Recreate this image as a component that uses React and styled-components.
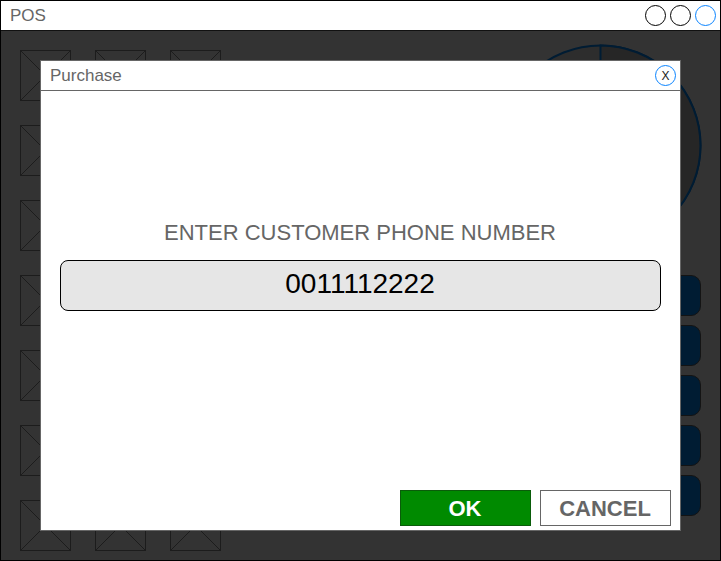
import React from "react";
import styled, { createGlobalStyle } from "styled-components";

const GlobalStyle = createGlobalStyle`
  * { box-sizing: border-box; }
  body {
    margin: 0;
    overflow: hidden;
    font-family: "Liberation Sans", Arial, sans-serif;
  }
`;

const Window = styled.main`
  position: relative;
  display: flex;
  flex-direction: column;
  width: 721px;
  height: 561px;
  border: 1px solid #000;
  background: #333;
`;

const TitleBar = styled.header`
  display: flex;
  flex: none;
  align-items: center;
  justify-content: space-between;
  height: 30px;
  padding: 0 4px 0 9px;
  border-bottom: 1px solid ${(p) => p.$line};
  background: #fff;
`;

const Title = styled.h1`
  margin: 0;
  color: #666;
  font-size: 17px;
  font-weight: 400;
  line-height: 29px;
`;

const WindowControls = styled.div`
  display: flex;
  gap: 4px;
`;

const RoundButton = styled.button`
  display: flex;
  align-items: center;
  justify-content: center;
  width: 21px;
  height: 21px;
  padding: 2px 0 0;
  border: 1px solid ${(p) => (p.$accent ? "#0a84ff" : "#000")};
  border-radius: 50%;
  background: #fff;
  color: #222;
  font: 12px/17px "Liberation Sans", Arial, sans-serif;
`;

const Workspace = styled.div`
  display: flex;
  justify-content: space-between;
  padding: 19px 19px 0;
`;

const ProductGrid = styled.div`
  display: grid;
  grid-template-columns: repeat(3, 51px);
  grid-auto-rows: 51px;
  gap: 24px;
`;

const Picture = styled.svg`
  display: block;
  width: 51px;
  height: 51px;
  fill: none;
  stroke: #1c1c1c;
`;

const SidePanel = styled.aside`
  display: flex;
  flex-direction: column;
  align-items: flex-end;
  width: 202px;
  margin-top: -6px;
`;

const Pie = styled.svg`
  display: block;
  flex: none;
  width: 203px;
  height: 203px;
  margin: 0 -1px 28px 0;
`;

const Actions = styled.div`
  display: grid;
  grid-auto-rows: 41px;
  gap: 9px;
  width: 202px;
`;

const Action = styled.div`
  border: 1px solid #141414;
  border-radius: 10px;
  background: #001c33;
`;

const Dialog = styled.section`
  position: absolute;
  top: 59px;
  left: 39px;
  display: flex;
  flex-direction: column;
  width: 641px;
  height: 471px;
  border: 1px solid #666;
  background: #fff;
`;

const DialogBody = styled.div`
  display: flex;
  flex: 1;
  flex-direction: column;
  padding: 129px 19px 4px;
`;

const Prompt = styled.label`
  margin-bottom: 14px;
  padding-right: 1px;
  color: #666;
  font-size: 22px;
  line-height: 26px;
  text-align: center;
`;

const PhoneInput = styled.input`
  width: 601px;
  height: 51px;
  padding: 0 1px 4px 0;
  border: 1px solid #000;
  border-radius: 8px;
  outline: 0;
  background: #e6e6e6;
  color: #000;
  font: 28px "Liberation Sans", Arial, sans-serif;
  text-align: center;
`;

const DialogActions = styled.footer`
  display: flex;
  gap: 9px;
  justify-content: flex-end;
  margin: auto -10px 0 0;
`;

const DialogButton = styled.button`
  width: 131px;
  height: 36px;
  padding: 2px 1px 0 0;
  border: 1px solid ${(p) => (p.$primary ? "#0a5c0a" : "#666")};
  background: ${(p) => (p.$primary ? "#008a00" : "#fff")};
  color: ${(p) => (p.$primary ? "#fff" : "#666")};
  font: 700 22px/32px "Liberation Sans", Arial, sans-serif;
`;

const Placeholder = () => (
  <Picture viewBox="0 0 51 51">
    <rect x="0.5" y="0.5" width="50" height="50" />
    <path d="M0.5 0.5 50.5 50.5M0.5 50.5 50.5 0.5" />
  </Picture>
);

export default function App() {
  return (
    <>
      <GlobalStyle />
      <Window>
        <TitleBar $line="#111">
          <Title>POS</Title>
          <WindowControls>
            <RoundButton aria-label="Minimize" />
            <RoundButton aria-label="Maximize" />
            <RoundButton aria-label="Close" $accent />
          </WindowControls>
        </TitleBar>
        <Workspace>
          <ProductGrid>
            {Array.from({ length: 21 }, (_, i) => (
              <Placeholder key={i} />
            ))}
          </ProductGrid>
          <SidePanel>
            <Pie viewBox="0 0 203 203" stroke="#001c33" strokeWidth="2">
              <circle cx="101.5" cy="101.5" r="100" fill="#2d2d2d" />
              <path d="M101.5 101.5V1.5A100 100 0 0 1 101.5 201.5Z" fill="#262626" />
            </Pie>
            <Actions>
              {Array.from({ length: 5 }, (_, i) => (
                <Action key={i} />
              ))}
            </Actions>
          </SidePanel>
        </Workspace>
        <Dialog role="dialog" aria-label="Purchase">
          <TitleBar as="div" $line="#666">
            <Title as="h2">Purchase</Title>
            <RoundButton $accent>X</RoundButton>
          </TitleBar>
          <DialogBody>
            <Prompt htmlFor="phone">ENTER CUSTOMER PHONE NUMBER</Prompt>
            <PhoneInput id="phone" defaultValue="0011112222" />
            <DialogActions>
              <DialogButton $primary>OK</DialogButton>
              <DialogButton>CANCEL</DialogButton>
            </DialogActions>
          </DialogBody>
        </Dialog>
      </Window>
    </>
  );
}
